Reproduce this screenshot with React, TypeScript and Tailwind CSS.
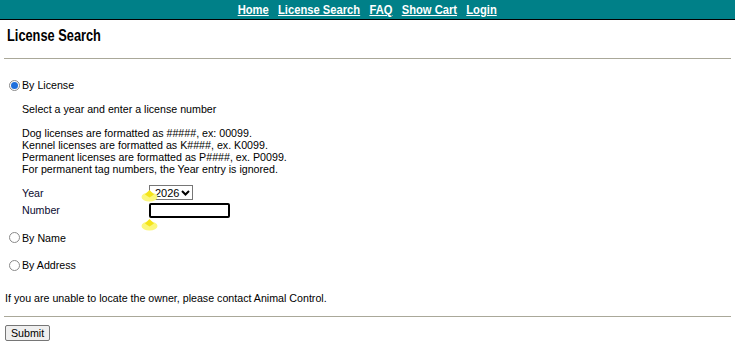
import { useState } from 'react';

const navLinks = ['Home', 'License Search', 'FAQ', 'Show Cart', 'Login'];

const Radio = ({ checked, onClick }: { checked: boolean; onClick: () => void }) => (
  <span
    onClick={onClick}
    className="ml-[5px] mr-[2px] inline-flex h-[11px] w-[11px] shrink-0 cursor-pointer items-center justify-center rounded-full border border-[#8a8a8a] bg-white"
  >
    {checked && <span className="h-[7px] w-[7px] rounded-full bg-[#1e6fdc]" />}
  </span>
);

const Blob = ({ className }: { className: string }) => (
  <svg className={className} width="17" height="13" viewBox="0 0 17 13">
    <ellipse cx="8.5" cy="8" rx="8" ry="4.5" fill="#fbf77c" />
    <path d="M8.5 1 L13 5.5 L8.5 8.5 L4 5.5 Z" fill="#f4e41a" />
  </svg>
);

const App = () => {
  const [mode, setMode] = useState('license');

  return (
    <div className="relative min-h-[354px] bg-white font-['Liberation_Sans','Arial',sans-serif] text-[10.67px] text-black">
      {/* no narrow font installed, so squeeze the bold face */}
      <div className="flex h-[20px] items-center justify-center border-b border-black bg-[#008088]">
        <div className="flex scale-x-[0.84] gap-[11px] font-['Liberation_Sans','Arial',sans-serif] text-[13.33px] font-bold leading-[16px] text-white">
          {navLinks.map((l) => (
            <a key={l} href="#" className="underline">
              {l}
            </a>
          ))}
        </div>
      </div>

      <div className="px-[4px]">
        <h1 className="pl-[3px] pt-[7px] text-[16px] font-bold leading-[18px]">
          <span className="inline-block origin-left scale-x-[0.8]">License Search</span>
        </h1>
        <hr className="mt-[13px] border-t border-[#aaa899]" />

        <div className="mt-[20px] flex items-center leading-[12.3px]">
          <Radio checked={mode === 'license'} onClick={() => setMode('license')} />
          <span>By License</span>
        </div>

        <div className="pl-[18px] leading-[12.3px]">
          <p className="mt-[12px]">Select a year and enter a license number</p>
          <p className="mt-[11px]">
            Dog licenses are formatted as #####, ex: 00099.
            <br />
            Kennel licenses are formatted as K####, ex. K0099.
            <br />
            Permanent licenses are formatted as P####, ex. P0099.
            <br />
            For permanent tag numbers, the Year entry is ignored.
          </p>

          <div className="mt-[8px] text-[#0a0a30]">
            <div className="flex h-[18px] items-center">
              <span className="w-[127px]">Year</span>
              <div className="relative flex h-[15px] w-[44px] items-center border border-[#767676] bg-white pl-[5px] text-[11px] text-black">
                <span>2026</span>
                <svg className="absolute right-[2px] top-[4px]" width="9" height="6" viewBox="0 0 9 6">
                  <path d="M1 1 L4.5 4.5 L8 1" fill="none" stroke="black" strokeWidth="2" />
                </svg>
              </div>
            </div>
            <div className="flex h-[17px] items-center">
              <span className="w-[127px]">Number</span>
              <input className="h-[15px] w-[81px] rounded-[2px] border-2 border-black bg-white outline-none" />
            </div>
          </div>
        </div>

        <div className="mt-[13px] flex items-center leading-[12.3px]">
          <Radio checked={mode === 'name'} onClick={() => setMode('name')} />
          <span>By Name</span>
        </div>
        <div className="mt-[15px] flex items-center leading-[12.3px]">
          <Radio checked={mode === 'address'} onClick={() => setMode('address')} />
          <span>By Address</span>
        </div>

        <p className="mt-[21px] pl-[1px] leading-[12.3px]">If you are unable to locate the owner, please contact Animal Control.</p>
        <hr className="mt-[11px] border-t border-[#aaa899]" />
        <button className="mt-[8px] ml-[1px] h-[16px] rounded-[2px] border border-[#767676] bg-[#efefef] px-[5px] text-[10.67px] leading-[12px]">
          Submit
        </button>
      </div>

      <Blob className="pointer-events-none absolute left-[141px] top-[189px]" />
      <Blob className="pointer-events-none absolute left-[141px] top-[218px]" />
    </div>
  );
};

export default App;
